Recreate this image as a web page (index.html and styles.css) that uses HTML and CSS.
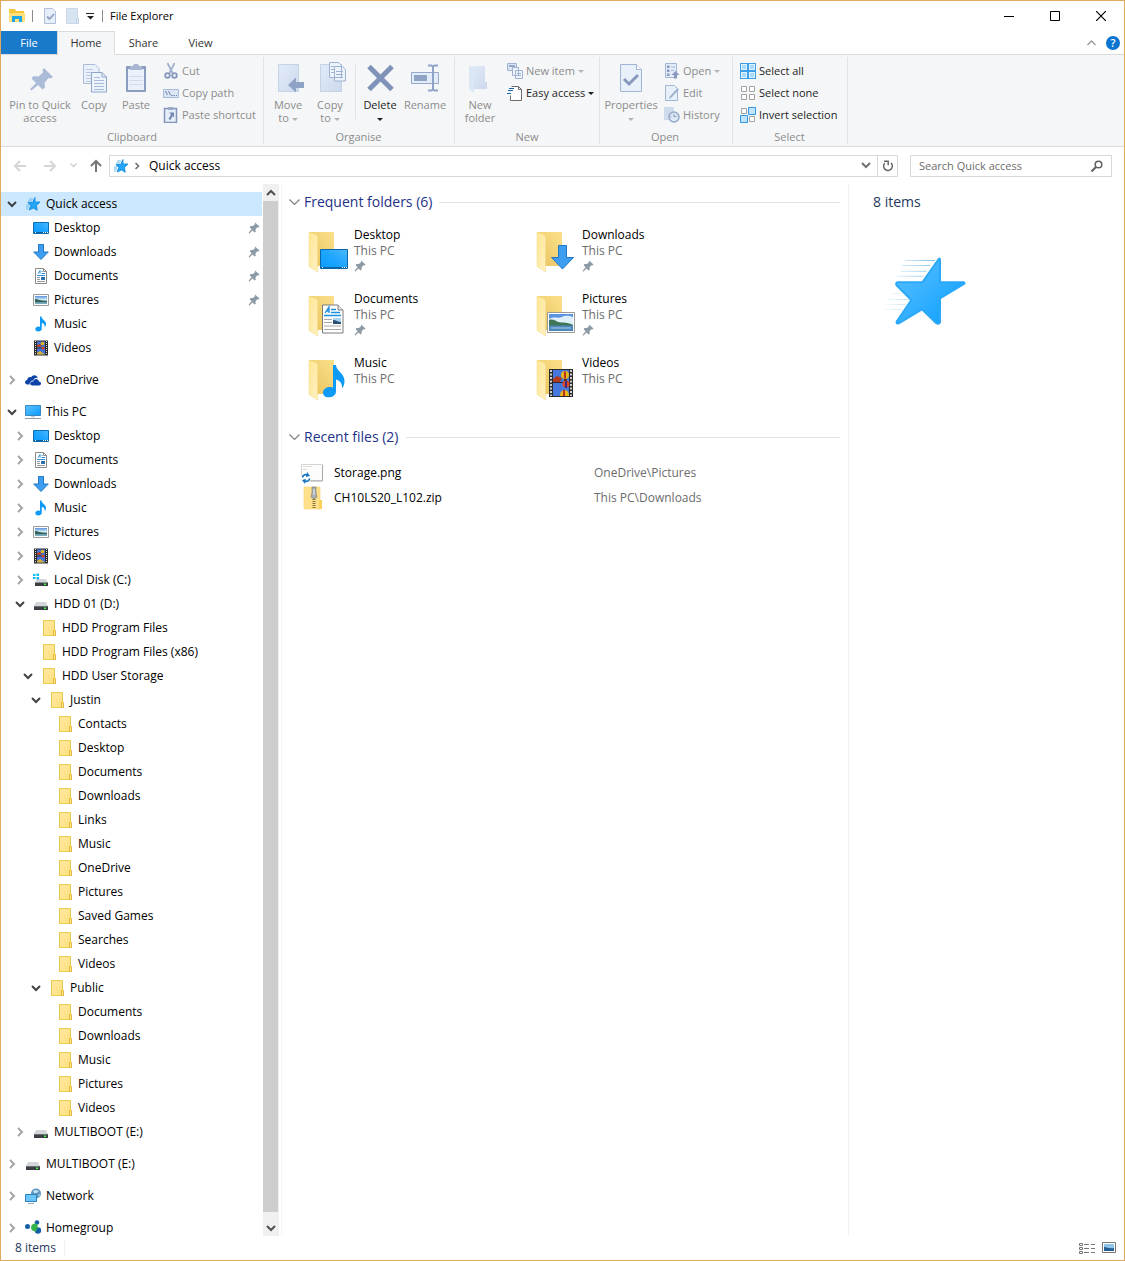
FILE: index.html
```html
<!DOCTYPE html>
<html lang="en-GB">
<head>
<meta charset="utf-8">
<meta name="viewport" content="width=device-width, initial-scale=1">
<title>File Explorer</title>
<link rel="stylesheet" href="styles.css">
</head>
<body>
<svg class="sprite" aria-hidden="true">
  <defs>
    <linearGradient id="g-blue" x1="0" y1="0" x2="1" y2="1"><stop offset="0" stop-color="#5cc0ff"/><stop offset=".5" stop-color="#34b0ff"/><stop offset="1" stop-color="#049cff"/></linearGradient>
    <linearGradient id="g-screen" x1="0" y1="1" x2="1" y2="0"><stop offset="0" stop-color="#0a9bff"/><stop offset=".5" stop-color="#1ea5ff"/><stop offset="1" stop-color="#4db8ff"/></linearGradient>
    <linearGradient id="g-folder" x1="0" y1="0" x2="1" y2="1"><stop offset="0" stop-color="#ffeaa2"/><stop offset="1" stop-color="#ffdf7e"/></linearGradient>
    <linearGradient id="g-back" x1="0" y1="1" x2="1" y2="0"><stop offset="0" stop-color="#e8c25c"/><stop offset="1" stop-color="#fbe08b"/></linearGradient>
    <linearGradient id="g-flap" x1="0" y1="0" x2="1" y2="1"><stop offset="0" stop-color="#ffe795"/><stop offset="1" stop-color="#fff0c0"/></linearGradient>
    <linearGradient id="g-sky" x1="0" y1="0" x2="0" y2="1"><stop offset="0" stop-color="#5b93dc"/><stop offset=".45" stop-color="#cfe8f8"/><stop offset=".7" stop-color="#5f8f8c"/><stop offset="1" stop-color="#7fb3d6"/></linearGradient>
    <linearGradient id="g-streak" x1="0" y1="0" x2="1" y2="0"><stop offset="0" stop-color="#9fd2f2" stop-opacity="0"/><stop offset="1" stop-color="#7fc0ea"/></linearGradient>
    <linearGradient id="g-pale" x1="0" y1="0" x2="1" y2="1"><stop offset="0" stop-color="#e3ebf7"/><stop offset="1" stop-color="#ccd9ec"/></linearGradient>
  </defs>

  <symbol id="down" viewBox="0 0 16 16"><path d="M4 6l4 4 4-4" fill="none" stroke="#404040" stroke-width="2"/></symbol>
  <symbol id="right" viewBox="0 0 16 16"><path d="M6 4l4 4-4 4" fill="none" stroke="#a6a6a6" stroke-width="2"/></symbol>
  <symbol id="pin" viewBox="0 0 16 16"><path d="M9 2.500l4.500 4-1.200 1-1-.3-1.800 2.300.2 2.300-1.200.6L6.500 10.500 3.500 13.500l-.8-.2.300-1L5.600 9.300 3.700 7.200l.8-1.200h2.300L9 4.300z" fill="#8e9aa3"/></symbol>

  <symbol id="star" viewBox="0 0 16 16"><path d="M10 1.500V6h5l-3.500 3.500.7 4.800L8.500 12 4.200 14l1.500-4.300L3 6.500h4.500z" fill="#22a5f7" stroke="#0f86d8" stroke-width=".8" stroke-linejoin="round"/><path d="M4 3h4M3 5h4M1 9h3M1 11h3M1 13h2" stroke="#6ab9ea"/></symbol>
  <symbol id="desktop" viewBox="0 0 16 16"><path d="M.5 2.500h15v11H.5z" fill="url(#g-screen)" stroke="#0c6cb4"/><path d="M1 12.500h14" stroke="#0b5e9e"/><path d="M2 12.500h1M10 12.500h1M12 12.500h1M14 12.500h1" stroke="#fff"/></symbol>
  <symbol id="downloads" viewBox="0 0 16 16"><path d="M5.500.5h5V8h4.800L8 15.500.7 8h4.800z" fill="#3d9df0" stroke="#2377c4"/></symbol>
  <symbol id="documents" viewBox="0 0 16 16"><path d="M2.500.5h8l3 3v12h-11z" fill="#fff" stroke="#8a8a8a"/><path d="M10.500.5v3h3" fill="none" stroke="#8a8a8a"/><path d="M5 5.500l2-3v3M8.500 3.500h1M8.500 5.500H12M4 7.500h8" stroke="#2b92dd" fill="none"/><path d="M4 9.500h3M4 11.500h3M4 13.500h8" stroke="#999"/><path d="M8 9h4v3H8z" fill="#2b6fae"/></symbol>
  <symbol id="pictures" viewBox="0 0 16 16"><path d="M.5 2.500h15v11H.5z" fill="#fff" stroke="#9a9a9a"/><path d="M2 4h12v8H2z" fill="url(#g-sky)"/><path d="M2 7c3 0 5 2 12 2v1H2z" fill="#2f6157"/></symbol>
  <symbol id="music" viewBox="0 0 16 16"><path d="M7 .5h1.500C9 4 13 4.500 13 8c0 1.500-.6 2.500-1.300 3.200C12 8.500 10.500 7.200 8.800 7v5.500c0 1.800-1.500 3-3.500 3s-3-1-3-2.200c0-1.600 1.600-2.700 3.200-2.700.6 0 1 .1 1.500.3z" fill="#0e9af5"/></symbol>
  <symbol id="videos" viewBox="0 0 16 16"><path d="M1 .5h14v15H1z" fill="#2c2c2c"/><path d="M2.500 1v14M13.500 1v14" stroke="#d8d8d8" stroke-dasharray="1 1"/><path d="M4 1.500h8v6H4zM4 8.500h8v6H4z" fill="#4273d8"/><path d="M4 5l3-1 2 2-3 1H4z" fill="#b9401f"/><circle cx="9.500" cy="3.500" r="1.800" fill="#e3b418"/><circle cx="10" cy="8" r="1.500" fill="#d8432a"/><path d="M4 13l3-2 5 3.500H4z" fill="#d6b02f"/></symbol>
  <symbol id="onedrive" viewBox="0 0 16 16"><path d="M4.500 12.500H2.300C.9 12.500 0 11.500 0 10.300 0 9 1 8.100 2.200 8 2.200 6.300 3.500 5 5.200 5c.4 0 .7 0 1 .2C6.900 4 8 3.300 9.300 3.300c1.700 0 3 1.100 3.500 2.600-2.300-.5-4 .8-4.700 2.600-2 .1-3.600 1.600-3.600 4z" fill="#0d43a8"/><path d="M7.200 13.500c-1.200 0-2-.9-2-2 0-1.200.9-2.100 2.200-2.100h.8C8.500 8 9.600 7 11 7c1.500 0 2.700 1 2.900 2.500 1.200 0 2.100.9 2.100 2s-.9 2-2 2z" fill="#0d43a8"/></symbol>
  <symbol id="thispc" viewBox="0 0 16 16"><path d="M.5 1.500h15v10H.5z" fill="url(#g-blue)" stroke="#3a86bf"/><path d="M6 12h4v1.500H6z" fill="#c7d3dc"/><path d="M0 14.500h16" stroke="#8fa0ad"/></symbol>
  <symbol id="drive" viewBox="0 0 16 16"><path d="M3 6h10l2 4H1z" fill="#d3d5d8"/><path d="M1 10h14v4H1z" fill="#3b3f43"/><path d="M1 10.500h14" stroke="#6b7075"/><path d="M11 11.500h2V13h-2z" fill="#3dff3d"/></symbol>
  <symbol id="sysdrive" viewBox="0 0 16 16"><path d="M4 7h9l2 4H2z" fill="#d3d5d8"/><path d="M2 10h13v4H2z" fill="#3b3f43"/><path d="M2 10.500h13" stroke="#8b9095"/><path d="M11 11.500h2V13h-2z" fill="#3dff3d"/><path d="M0 2h2.500v2H0zM3.500 1.500H6V4H3.500zM0 5h2.500v2H0zM3.500 5H6v2.500H3.500z" fill="#0bbcf2"/></symbol>
  <symbol id="folder" viewBox="0 0 16 16"><path d="M2.500.5h11v15h-11z" fill="url(#g-folder)" stroke="#ecc94f"/><path d="M12.500 10.500h2v5h-2z" fill="#ffe48f" stroke="#e3bb3f"/></symbol>
  <symbol id="network" viewBox="0 0 16 16"><circle cx="11" cy="5.500" r="5" fill="#5d94bd"/><path d="M8 3c2-2 5-1 6 1-2 0-3 2-5 1zM13 7l2-1-1 3z" fill="#bfe0f2"/><path d="M.5 6.500h11v7H.5z" fill="#6cc5fb" stroke="#2c81bd"/><path d="M3 15.500h6" stroke="#9aa9b4"/></symbol>
  <symbol id="homegroup" viewBox="0 0 16 16"><circle cx="2.500" cy="6.500" r="2.500" fill="#155fa8"/><circle cx="12" cy="2.500" r="2.300" fill="#155fa8"/><circle cx="13" cy="10.500" r="3.200" fill="#155fa8"/><path d="M6 7.500C6 4.500 9 3 11 3.500c1.500.5 2 2 1.500 4L11 11.500C8 11.500 6 10 6 7.500z" fill="#35b44a"/></symbol>

  <symbol id="t-folder" viewBox="0 0 48 48"><path d="M5 4h25v34H5z" fill="url(#g-back)"/><path d="M5 4l8.500 3.500V44L5 38.500z" fill="url(#g-flap)" stroke="#f3d880" stroke-width=".5"/></symbol>
  <symbol id="t-desktop" viewBox="0 0 48 48"><path d="M16.500 21.500h27v19h-27z" fill="url(#g-screen)" stroke="#0a66ab"/><path d="M17 39.500h26" stroke="#0a66ab"/><path d="M18 39.500h1M38 39.500h1M40 39.500h1M42 39.500h1" stroke="#fff"/></symbol>
  <symbol id="t-downloads" viewBox="0 0 48 48"><path d="M26.500 17.500h8v12h7L30.500 41 19.500 29.500h7z" fill="#3d9df0" stroke="#2377c4"/></symbol>
  <symbol id="t-documents" viewBox="0 0 48 48"><path d="M18.500 13h15.500l5 5v23h-20.500z" fill="#fff" stroke="#7d7d7d"/><path d="M34 13v5h5" fill="#e8e8e8" stroke="#7d7d7d"/><path d="M21 21l4-6v6M22 19h3M27 17.500h5M27 20.500h9M20 23.500h17" fill="none" stroke="#1f8fe0" stroke-width="1.300"/><path d="M20 27.500h8M20 30.500h8M20 34h17M20 37.500h17" stroke="#a8a8a8"/><path d="M29 26h8v6h-8z" fill="#a9d3ee"/><path d="M29 28c3 0 5 2 8 2v2h-8z" fill="#2b4f72"/></symbol>
  <symbol id="t-pictures" viewBox="0 0 48 48"><path d="M15.500 20.500h27v20h-27z" fill="#fff" stroke="#9a9a9a"/><path d="M17 22h24v17H17z" fill="#5a93e0"/><path d="M17 27c5-3 9 0 13-2s7-1 11 0v8H17z" fill="#dff0fb"/><path d="M17 28c3-1 6 0 9 2 5 1 10 0 15 3v1H17z" fill="#3f7658"/><path d="M17 33.500h24V39H17z" fill="#4c87bd"/><path d="M19 36h20" stroke="#a5cde6"/></symbol>
  <symbol id="t-music" viewBox="0 0 48 48"><path d="M29 9h3c0 6 8.500 8 8.500 16 0 3-1 5.500-2.500 7.500.5-5-2-8-6-9v12c0 3.500-3.500 5.800-7.500 5.800S19 39 19 36.500c0-3.500 3.500-5.500 7-5.500 1.200 0 2 .2 3 .5z" fill="#0e9af5"/></symbol>
  <symbol id="t-videos" viewBox="0 0 48 48"><path d="M17 13h24v28H17z" fill="#2b2b2b"/><path d="M19 14v26M39 14v26" stroke="#cfcfcf" stroke-width="2" stroke-dasharray="2 1.500"/><path d="M21 14h16v12H21zM21 27h16v13H21z" fill="#4577dc"/><path d="M21 23l4-3 5 2-2 4h-7z" fill="#b3391f"/><circle cx="33" cy="19" r="4" fill="#e8b81a"/><path d="M32 15.500h2v7h-2z" fill="#b93320"/><path d="M32 23h3v2h-3z" fill="#40301a"/><circle cx="34" cy="28" r="3.500" fill="#dd4a2a"/><path d="M33 25h2v7h-2z" fill="#3b2a7a"/><path d="M28 40c0-4 2-6 4.500-6s4.500 2 4.500 6z" fill="#e8b81a"/><path d="M31 34h2v6h-2z" fill="#b93320"/></symbol>

  <symbol id="r-pin" viewBox="0 0 32 32"><path d="M20 6l9 9-2.500 1.500-2-.5-4 5 .5 4.500-2.500 2-4.500-4.500L7.500 28.500 6 27.300 12 21l-4.500-4.500L9.500 14l5 .5 4.500-4-.5-2.500z" fill="#acbcd8"/></symbol>
  <symbol id="r-copy" viewBox="0 0 32 32"><path d="M5.500 2.500H17l4 4v15H5.500z" fill="#eaf1fa" stroke="#aabbd8"/><path d="M8 7.500h7M8 10.500h9M8 13.500h6M8 16.500h6M8 19.500h5" stroke="#b9c8e0"/><path d="M13.500 10.500H24l4.500 4.500v15h-15z" fill="#edf3fb" stroke="#8fa5c8"/><path d="M24 10.500v4.500h4.500" fill="none" stroke="#8fa5c8"/><path d="M16 15.500h6M16 18.500h10M16 21.500h10M16 24.500h10M16 27.500h10" stroke="#a8bbda"/></symbol>
  <symbol id="r-paste" viewBox="0 0 32 32"><rect x="6" y="4" width="20" height="26" rx="1" fill="#8a9cbf"/><path d="M8 7h16v21H8z" fill="#eaf1fb"/><path d="M9 14.500h14M9 18.500h14M9 22.500h14" stroke="#d2def0"/><path d="M10 4h3c0-3 6-3 6 0h3v4H10z" fill="#a9b6cf"/></symbol>
  <symbol id="r-move" viewBox="0 0 32 32"><path d="M6 2h21v28H6z" fill="url(#g-pale)"/><path d="M6.500 2.500h20v27h-20z" fill="none" stroke="#c5d3e8"/><path d="M16 23l8-7.500v4.500h8v6h-8v4.500z" fill="#8fa3c7"/></symbol>
  <symbol id="r-copyto" viewBox="0 0 32 32"><path d="M6 2h22v28H6z" fill="url(#g-pale)"/><path d="M6.500 2.500h21v27h-21z" fill="none" stroke="#c5d3e8"/><path d="M15.500.5h9l3 3v12h-12zM20.500 4.500h8l3 3V19H20.500z" fill="#edf3fb" stroke="#9fb2d2"/><path d="M17 4.500h3M17 7.500h3M17 10.500h3M22 9.500h7M22 12.500h7M22 15.500h7" stroke="#9fb2d2"/></symbol>
  <symbol id="r-delete" viewBox="0 0 32 32"><path d="M5 4.500l23 23M28 4.500l-23 23" stroke="#7f92b7" stroke-width="5"/></symbol>
  <symbol id="r-rename" viewBox="0 0 32 32"><path d="M2.500 10.500h27v11h-27z" fill="#e3ecf8" stroke="#94a8ca"/><path d="M5 13h13v6H5z" fill="#8fa3c7"/><path d="M19 3.500h3.500l1.500 1 1.500-1H29M19 28.500h3.500l1.500-1 1.500 1H29M24 4v24" fill="none" stroke="#8fa3c7" stroke-width="2"/></symbol>
  <symbol id="r-newfolder" viewBox="0 0 32 32"><path d="M5 4h16v16h2v7H5z" fill="url(#g-pale)"/><path d="M5 4l5 3v24l-5-4z" fill="#dce7f5"/></symbol>
  <symbol id="r-properties" viewBox="0 0 32 32"><path d="M5.500 2.500h16l5 5v22h-21z" fill="#e8f0fa" stroke="#a3b5d4"/><path d="M21.500 2.500v5h5" fill="#fff" stroke="#a3b5d4"/><path d="M9 17l5 5 9-9" fill="none" stroke="#8799bd" stroke-width="3"/></symbol>

  <symbol id="s-cut" viewBox="0 0 16 16"><path d="M4.500 0l5 10M11.500 0l-5 10" stroke="#a0b0cd" stroke-width="1.800"/><circle cx="4.500" cy="12.500" r="2.300" fill="none" stroke="#8599bf" stroke-width="1.800"/><circle cx="11.500" cy="12.500" r="2.300" fill="none" stroke="#8599bf" stroke-width="1.800"/></symbol>
  <symbol id="s-path" viewBox="0 0 16 16"><path d="M.5 4.500h15v8H.5z" fill="#dbe6f4" stroke="#a9bad8"/><path d="M2.500 6l2 4M5.500 6l2 4M8 10.500h1.500M10.500 10.500H12M13 10.500h1" stroke="#6d80a6"/></symbol>
  <symbol id="s-shortcut" viewBox="0 0 16 16"><path d="M1.500 1.500h12v14h-12z" fill="#e6eef9" stroke="#8395b8" stroke-width="1.500"/><path d="M5 0h5v3H5z" fill="#98a8c5"/><path d="M6 5.500h5v5L9.500 9 7.500 13 5.500 12 8 7.500z" fill="#7388b0"/></symbol>
  <symbol id="s-newitem" viewBox="0 0 16 16"><path d="M.5.5h9v7h-9z" fill="#dbe5f3" stroke="#a0b2d0"/><path d="M2 3h6" stroke="#8093b8" stroke-width="1.500"/><path d="M5.500 4.500h6v8h-6zM8.500 7.500h7v8h-7z" fill="#eef4fb" stroke="#a0b2d0"/><path d="M10 10.500h4M10 12.500h4" stroke="#a0b2d0"/></symbol>
  <symbol id="s-easy" viewBox="0 0 16 16"><path d="M4.500 1.500h7l3 3v11h-11v-5" fill="#fff" stroke="#6c6c6c"/><path d="M11.500 1.500v3h3" fill="none" stroke="#6c6c6c"/><path d="M2 3.500h5M1 5.500h5M0 8.500h4" stroke="#1c66a8"/></symbol>
  <symbol id="s-open" viewBox="0 0 16 16"><path d="M1.500.5h11v14h-11z" fill="#e3ecf8" stroke="#a3b5d4"/><path d="M3 2.500h2.500v2.500H3zM3 6.500h2.500V9H3zM3 10.500h2.500V13H3z" fill="#8799bd"/><path d="M7 4h4M7 7.500h3" stroke="#a3b5d4"/><path d="M11.500 8l4 4h-2.500v3.500h-3V12H7.500z" fill="#8799bd"/></symbol>
  <symbol id="s-edit" viewBox="0 0 16 16"><path d="M1.500.5h9l3 3v12h-12z" fill="#e8f0fa" stroke="#a3b5d4"/><path d="M15 4.500L7 13l-2 1 .8-2.500L13.500 3z" fill="#a0b2d0"/></symbol>
  <symbol id="s-history" viewBox="0 0 16 16"><path d="M0 0h10v13H0z" fill="#cfdcee"/><circle cx="10" cy="10" r="5" fill="#dfe8f5" stroke="#94a8ca" stroke-width="1.500"/><path d="M10 7v3l2.500-1M6.500 10h1" fill="none" stroke="#8799bd"/></symbol>
  <symbol id="s-all" viewBox="0 0 16 16"><path d="M0 0h16v16H0z" fill="#3d9fea"/><path d="M1 1h6v6H1zM9 1h6v6H9zM1 9h6v6H1zM9 9h6v6H9z" fill="#e2f3fe"/><path d="M2 2h4v4H2zM10 2h4v4h-4zM2 10h4v4H2zM10 10h4v4h-4z" fill="#a8dbfc"/></symbol>
  <symbol id="s-none" viewBox="0 0 16 16"><path d="M1.500 1.500h5v5h-5zM9.500 1.500h5v5h-5zM1.500 9.500h5v5h-5zM9.500 9.500h5v5h-5z" fill="#fff" stroke="#a2a2a2"/></symbol>
  <symbol id="s-invert" viewBox="0 0 16 16"><path d="M1.500 1.500h5v5h-5zM9.500 9.500h5v5h-5z" fill="#fff" stroke="#a2a2a2"/><path d="M8.500.5h7v7h-7zM.5 8.500h7v7h-7z" fill="#bfe4fc" stroke="#2f96e8"/></symbol>

  <symbol id="explorer" viewBox="0 0 16 16"><path d="M0 1h6l1 2h8v11H0z" fill="#f5c73d"/><path d="M0 5h16v9H0z" fill="#ffe07a"/><path d="M3 8h10v6h-3v-3H6v3H3z" fill="#1ba7e8"/></symbol>
  <symbol id="q-props" viewBox="0 0 16 16"><path d="M2.500.5h8l3 3v12h-11z" fill="#e6eefa" stroke="#b0bfda"/><path d="M5 8.500l2.500 2.500L12 6" fill="none" stroke="#8fa1c4" stroke-width="1.800"/></symbol>
  <symbol id="q-folder" viewBox="0 0 16 16"><path d="M2 0h12v10h1v6H2z" fill="#d9e4f3"/><path d="M2.500.5h11v15h-11z" fill="none" stroke="#cad8ec"/><path d="M12.500 10.500h2v5h-2z" fill="#e5edf8" stroke="#c5d3e8"/></symbol>
</svg>

<div class="window">
  <header class="titlebar">
    <svg class="i16"><use href="#explorer"/></svg>
    <span class="rule"></span>
    <div class="quick">
      <button aria-label="Properties"><svg class="i16"><use href="#q-props"/></svg></button>
      <button aria-label="New folder"><svg class="i16"><use href="#q-folder"/></svg></button>
      <button aria-label="Customise Quick Access Toolbar"><svg width="8" height="8" viewBox="0 0 8 8"><path d="M0 1.500h8" stroke="#222"/><path d="M1 4h7L4.500 7.500z" fill="#222"/></svg></button>
    </div>
    <span class="rule"></span>
    <h1>File Explorer</h1>
    <div class="caption">
      <button aria-label="Minimise"><svg width="10" height="10"><path d="M0 5.500h10" stroke="#000"/></svg></button>
      <button aria-label="Maximise"><svg width="10" height="10"><path d="M.5.5h9v9h-9z" fill="none" stroke="#000"/></svg></button>
      <button aria-label="Close"><svg width="10" height="10"><path d="M0 0l10 10M10 0L0 10" stroke="#000" stroke-width="1.200"/></svg></button>
    </div>
  </header>

  <div class="tabs">
    <button class="tab file">File</button>
    <button class="tab current">Home</button>
    <button class="tab">Share</button>
    <button class="tab">View</button>
    <div class="tabs-end">
      <button aria-label="Collapse ribbon"><svg width="9" height="6"><path d="M.5 5l4-4 4 4" fill="none" stroke="#9a9a9a" stroke-width="1.300"/></svg></button>
      <button class="help" aria-label="Help">?</button>
    </div>
  </div>

  <div class="ribbon">
    <section class="group clipboard">
      <div class="tools">
        <button class="big wide"><svg><use href="#r-pin"/></svg><span>Pin to Quick<br>access</span></button>
        <button class="big narrow"><svg><use href="#r-copy"/></svg><span>Copy</span></button>
        <button class="big paste"><svg><use href="#r-paste"/></svg><span>Paste</span></button>
        <div class="stack">
          <button><svg class="i16"><use href="#s-cut"/></svg>Cut</button>
          <button><svg class="i16"><use href="#s-path"/></svg>Copy path</button>
          <button><svg class="i16"><use href="#s-shortcut"/></svg>Paste shortcut</button>
        </div>
      </div>
      <h2>Clipboard</h2>
    </section>
    <section class="group organise">
      <div class="tools">
        <button class="big"><svg><use href="#r-move"/></svg><span>Move<br>to <i class="caret"></i></span></button>
        <button class="big"><svg><use href="#r-copyto"/></svg><span>Copy<br>to <i class="caret"></i></span></button>
        <span class="divider"></span>
        <button class="big on"><svg><use href="#r-delete"/></svg><span>Delete<br><i class="caret"></i></span></button>
        <button class="big rename"><svg><use href="#r-rename"/></svg><span>Rename</span></button>
      </div>
      <h2>Organise</h2>
    </section>
    <section class="group new">
      <div class="tools">
        <button class="big"><svg><use href="#r-newfolder"/></svg><span>New<br>folder</span></button>
        <div class="stack">
          <button><svg class="i16"><use href="#s-newitem"/></svg>New item <i class="caret"></i></button>
          <button class="on"><svg class="i16"><use href="#s-easy"/></svg>Easy access <i class="caret"></i></button>
        </div>
      </div>
      <h2>New</h2>
    </section>
    <section class="group open">
      <div class="tools">
        <button class="big mid"><svg><use href="#r-properties"/></svg><span>Properties<br><i class="caret"></i></span></button>
        <div class="stack">
          <button><svg class="i16"><use href="#s-open"/></svg>Open <i class="caret"></i></button>
          <button><svg class="i16"><use href="#s-edit"/></svg>Edit</button>
          <button><svg class="i16"><use href="#s-history"/></svg>History</button>
        </div>
      </div>
      <h2>Open</h2>
    </section>
    <section class="group select">
      <div class="tools">
        <div class="stack">
          <button class="on"><svg class="i16"><use href="#s-all"/></svg>Select all</button>
          <button class="on"><svg class="i16"><use href="#s-none"/></svg>Select none</button>
          <button class="on"><svg class="i16"><use href="#s-invert"/></svg>Invert selection</button>
        </div>
      </div>
      <h2>Select</h2>
    </section>
  </div>

  <div class="navbar">
    <div class="history">
      <button aria-label="Back"><svg width="14" height="12"><path d="M13 6H2M7 1L2 6l5 5" fill="none" stroke="#d6d6d6" stroke-width="2"/></svg></button>
      <button aria-label="Forward"><svg width="14" height="12"><path d="M1 6h11M7 1l5 5-5 5" fill="none" stroke="#d6d6d6" stroke-width="2"/></svg></button>
      <button class="recent" aria-label="Recent locations"><svg width="7" height="5"><path d="M.5.5l3 3 3-3" fill="none" stroke="#cfcfcf" stroke-width="1.500"/></svg></button>
      <button class="up" aria-label="Up"><svg width="12" height="13"><path d="M6 13V2M1 7l5-5 5 5" fill="none" stroke="#757575" stroke-width="2"/></svg></button>
    </div>
    <div class="address">
      <svg class="i16"><use href="#star"/></svg>
      <svg width="5" height="8"><path d="M.5 1l3 3-3 3" fill="none" stroke="#6a6a6a" stroke-width="1.500"/></svg>
      <a href="#">Quick access</a>
      <button aria-label="Previous locations"><svg width="10" height="7"><path d="M1 1l4 4 4-4" fill="none" stroke="#707070" stroke-width="2"/></svg></button>
      <button class="refresh" aria-label="Refresh"><svg width="12" height="12" viewBox="0 0 12 12"><path d="M2.700 3.300A4.300 4.300 0 1 0 9 3" fill="none" stroke="#666" stroke-width="1.600"/><path d="M2 1.200h4.200v4" fill="none" stroke="#666" stroke-width="1.500"/></svg></button>
    </div>
    <label class="search">
      <input type="search" placeholder="Search Quick access" aria-label="Search Quick access">
      <svg width="12" height="12"><circle cx="7.500" cy="4.500" r="3.300" fill="none" stroke="#606060" stroke-width="1.500"/><path d="M5 7L.5 11.500" stroke="#606060" stroke-width="2"/></svg>
    </label>
  </div>

  <div class="panes">
    <nav class="tree" aria-label="Navigation pane">
      <ul>
        <li>
          <div class="row selected"><button aria-label="Collapse"><svg class="i16"><use href="#down"/></svg></button><a href="#"><svg class="i16"><use href="#star"/></svg>Quick access</a></div>
          <ul>
            <li class="row leaf"><a href="#"><svg class="i16"><use href="#desktop"/></svg>Desktop</a><svg class="i16"><use href="#pin"/></svg></li>
            <li class="row leaf"><a href="#"><svg class="i16"><use href="#downloads"/></svg>Downloads</a><svg class="i16"><use href="#pin"/></svg></li>
            <li class="row leaf"><a href="#"><svg class="i16"><use href="#documents"/></svg>Documents</a><svg class="i16"><use href="#pin"/></svg></li>
            <li class="row leaf"><a href="#"><svg class="i16"><use href="#pictures"/></svg>Pictures</a><svg class="i16"><use href="#pin"/></svg></li>
            <li class="row leaf"><a href="#"><svg class="i16"><use href="#music"/></svg>Music</a></li>
            <li class="row leaf"><a href="#"><svg class="i16"><use href="#videos"/></svg>Videos</a></li>
          </ul>
        </li>
        <li>
          <div class="row"><button aria-label="Expand"><svg class="i16"><use href="#right"/></svg></button><a href="#"><svg class="i16"><use href="#onedrive"/></svg>OneDrive</a></div>
        </li>
        <li>
          <div class="row"><button aria-label="Collapse"><svg class="i16"><use href="#down"/></svg></button><a href="#"><svg class="i16"><use href="#thispc"/></svg>This PC</a></div>
          <ul>
            <li class="row"><button aria-label="Expand"><svg class="i16"><use href="#right"/></svg></button><a href="#"><svg class="i16"><use href="#desktop"/></svg>Desktop</a></li>
            <li class="row"><button aria-label="Expand"><svg class="i16"><use href="#right"/></svg></button><a href="#"><svg class="i16"><use href="#documents"/></svg>Documents</a></li>
            <li class="row"><button aria-label="Expand"><svg class="i16"><use href="#right"/></svg></button><a href="#"><svg class="i16"><use href="#downloads"/></svg>Downloads</a></li>
            <li class="row"><button aria-label="Expand"><svg class="i16"><use href="#right"/></svg></button><a href="#"><svg class="i16"><use href="#music"/></svg>Music</a></li>
            <li class="row"><button aria-label="Expand"><svg class="i16"><use href="#right"/></svg></button><a href="#"><svg class="i16"><use href="#pictures"/></svg>Pictures</a></li>
            <li class="row"><button aria-label="Expand"><svg class="i16"><use href="#right"/></svg></button><a href="#"><svg class="i16"><use href="#videos"/></svg>Videos</a></li>
            <li class="row"><button aria-label="Expand"><svg class="i16"><use href="#right"/></svg></button><a href="#"><svg class="i16"><use href="#sysdrive"/></svg>Local Disk (C:)</a></li>
            <li>
              <div class="row"><button aria-label="Collapse"><svg class="i16"><use href="#down"/></svg></button><a href="#"><svg class="i16"><use href="#drive"/></svg>HDD 01 (D:)</a></div>
              <ul>
                <li class="row leaf"><a href="#"><svg class="i16"><use href="#folder"/></svg>HDD Program Files</a></li>
                <li class="row leaf"><a href="#"><svg class="i16"><use href="#folder"/></svg>HDD Program Files (x86)</a></li>
                <li>
                  <div class="row"><button aria-label="Collapse"><svg class="i16"><use href="#down"/></svg></button><a href="#"><svg class="i16"><use href="#folder"/></svg>HDD User Storage</a></div>
                  <ul>
                    <li>
                      <div class="row"><button aria-label="Collapse"><svg class="i16"><use href="#down"/></svg></button><a href="#"><svg class="i16"><use href="#folder"/></svg>Justin</a></div>
                      <ul>
                        <li class="row leaf"><a href="#"><svg class="i16"><use href="#folder"/></svg>Contacts</a></li>
                        <li class="row leaf"><a href="#"><svg class="i16"><use href="#folder"/></svg>Desktop</a></li>
                        <li class="row leaf"><a href="#"><svg class="i16"><use href="#folder"/></svg>Documents</a></li>
                        <li class="row leaf"><a href="#"><svg class="i16"><use href="#folder"/></svg>Downloads</a></li>
                        <li class="row leaf"><a href="#"><svg class="i16"><use href="#folder"/></svg>Links</a></li>
                        <li class="row leaf"><a href="#"><svg class="i16"><use href="#folder"/></svg>Music</a></li>
                        <li class="row leaf"><a href="#"><svg class="i16"><use href="#folder"/></svg>OneDrive</a></li>
                        <li class="row leaf"><a href="#"><svg class="i16"><use href="#folder"/></svg>Pictures</a></li>
                        <li class="row leaf"><a href="#"><svg class="i16"><use href="#folder"/></svg>Saved Games</a></li>
                        <li class="row leaf"><a href="#"><svg class="i16"><use href="#folder"/></svg>Searches</a></li>
                        <li class="row leaf"><a href="#"><svg class="i16"><use href="#folder"/></svg>Videos</a></li>
                      </ul>
                    </li>
                    <li>
                      <div class="row"><button aria-label="Collapse"><svg class="i16"><use href="#down"/></svg></button><a href="#"><svg class="i16"><use href="#folder"/></svg>Public</a></div>
                      <ul>
                        <li class="row leaf"><a href="#"><svg class="i16"><use href="#folder"/></svg>Documents</a></li>
                        <li class="row leaf"><a href="#"><svg class="i16"><use href="#folder"/></svg>Downloads</a></li>
                        <li class="row leaf"><a href="#"><svg class="i16"><use href="#folder"/></svg>Music</a></li>
                        <li class="row leaf"><a href="#"><svg class="i16"><use href="#folder"/></svg>Pictures</a></li>
                        <li class="row leaf"><a href="#"><svg class="i16"><use href="#folder"/></svg>Videos</a></li>
                      </ul>
                    </li>
                  </ul>
                </li>
              </ul>
            </li>
            <li class="row"><button aria-label="Expand"><svg class="i16"><use href="#right"/></svg></button><a href="#"><svg class="i16"><use href="#drive"/></svg>MULTIBOOT (E:)</a></li>
          </ul>
        </li>
        <li>
          <div class="row"><button aria-label="Expand"><svg class="i16"><use href="#right"/></svg></button><a href="#"><svg class="i16"><use href="#drive"/></svg>MULTIBOOT (E:)</a></div>
        </li>
        <li>
          <div class="row"><button aria-label="Expand"><svg class="i16"><use href="#right"/></svg></button><a href="#"><svg class="i16"><use href="#network"/></svg>Network</a></div>
        </li>
        <li>
          <div class="row"><button aria-label="Expand"><svg class="i16"><use href="#right"/></svg></button><a href="#"><svg class="i16"><use href="#homegroup"/></svg>Homegroup</a></div>
        </li>
      </ul>
    </nav>
    <div class="scrollbar">
      <button aria-label="Scroll up"><svg width="10" height="7"><path d="M1 6l4-4 4 4" fill="none" stroke="#505050" stroke-width="2"/></svg></button>
      <div class="thumb"></div>
      <button class="last" aria-label="Scroll down"><svg width="10" height="7"><path d="M1 1l4 4 4-4" fill="none" stroke="#505050" stroke-width="2"/></svg></button>
    </div>

    <main class="content">
      <section>
        <h2><svg width="11" height="7"><path d="M.5.5l5 5 5-5" fill="none" stroke="#808080" stroke-width="1.200"/></svg>Frequent folders (6)</h2>
        <div class="tiles">
          <a class="tile" href="#"><svg><use href="#t-folder"/><use href="#t-desktop"/></svg><span><b>Desktop</b>This PC<svg class="i16"><use href="#pin"/></svg></span></a>
          <a class="tile" href="#"><svg><use href="#t-folder"/><use href="#t-downloads"/></svg><span><b>Downloads</b>This PC<svg class="i16"><use href="#pin"/></svg></span></a>
          <a class="tile" href="#"><svg><use href="#t-folder"/><use href="#t-documents"/></svg><span><b>Documents</b>This PC<svg class="i16"><use href="#pin"/></svg></span></a>
          <a class="tile" href="#"><svg><use href="#t-folder"/><use href="#t-pictures"/></svg><span><b>Pictures</b>This PC<svg class="i16"><use href="#pin"/></svg></span></a>
          <a class="tile" href="#"><svg><use href="#t-folder"/><use href="#t-music"/></svg><span><b>Music</b>This PC</span></a>
          <a class="tile" href="#"><svg><use href="#t-folder"/><use href="#t-videos"/></svg><span><b>Videos</b>This PC</span></a>
        </div>
      </section>
      <section>
        <h2><svg width="11" height="7"><path d="M.5.5l5 5 5-5" fill="none" stroke="#808080" stroke-width="1.200"/></svg>Recent files (2)</h2>
        <table class="files">
          <tr>
            <td class="name"><a href="#"><svg viewBox="0 0 24 24"><path d="M1.500 3.500h21v16h-21z" fill="#fcfcfd" stroke="#d5d5d5"/><path d="M22.500 4v16H10" fill="none" stroke="#a9a9a9"/><path d="M3 5.500h9M3 8.500h4" stroke="#e8d9d0"/><circle cx="6" cy="17" r="5" fill="#fff"/><path d="M2.500 16.500c.3-2.500 2.500-3.500 5-2.500M9.500 17.500c-.3 2.500-2.500 3.500-5 2.500" fill="none" stroke="#1674c4" stroke-width="1.800"/><path d="M7 11l3 4-4 1zM5 23l-3-4 4-1z" fill="#1674c4"/></svg>Storage.png</a></td>
            <td>OneDrive\Pictures</td>
          </tr>
          <tr>
            <td class="name"><a href="#"><svg viewBox="0 0 24 24"><path d="M4 1h16v22H4z" fill="#ffe08a"/><path d="M19 14h3v9h-3z" fill="#fbd052"/><path d="M4 1h16v22H4z" fill="none" stroke="#f6d56f" stroke-width=".6"/><path d="M14 7v16" stroke="#857338" stroke-width="3" stroke-dasharray="1 1"/><path d="M12 1h4v6l1 4-3 2-3-2 1-4z" fill="#a9aeb2" stroke="#777" stroke-width=".6"/><path d="M14 3v6" stroke="#f0f0f0"/></svg>CH10LS20_L102.zip</a></td>
            <td>This PC\Downloads</td>
          </tr>
        </table>
      </section>
    </main>

    <aside class="details">
      <h2>8 items</h2>
      <svg viewBox="120 210 264 216"><path d="M195 225h90v3h-90zM186 240h84v3h-84zM182 257h78v3h-78zM170 272h80v3h-80zM155 324h30v2h-30zM140 342h66v3h-66zM132 357h64v3h-64zM122 372h64v3h-64z" fill="url(#g-streak)"/><path d="M296 222Q300 219 300 224V292H371Q376 293 372 297L300 340V412Q295 419 288 414L246 373 176 415Q168 417 170 410L214 345 169 300Q167 293 173 292H247z" fill="url(#g-blue)" stroke="#2ba9f8" stroke-width="6" stroke-linejoin="round"/></svg>
    </aside>
  </div>

  <footer class="status">
    <span>8 items</span>
    <div class="views">
      <button aria-label="Details view"><svg width="16" height="12"><path d="M.5 1.500h3v2h-3zM.5 5.500h3v2h-3zM.5 9.500h3v2h-3z" fill="#fff" stroke="#777"/><path d="M5 2.500h5M12 2.500h4M5 6.500h5M12 6.500h4M5 10.500h5M12 10.500h4" stroke="#777"/></svg></button>
      <button aria-label="Large icons view"><svg width="14" height="12"><path d="M.5.500h13v10H.5z" fill="#fff" stroke="#777"/><path d="M2 2h10v7H2z" fill="#8ec3ea"/><path d="M2 5c3 0 5 2 10 1v3H2z" fill="#245c94"/></svg></button>
    </div>
  </footer>
</div>
</body>
</html>
```
FILE: styles.css
```css
* { box-sizing: border-box; }

body {
  margin: 0;
  font: 12px/16px "Open Sans", "Noto Sans", sans-serif;
  color: #000;
  background: #fff;
}

h1, h2, ul { margin: 0; padding: 0; font: inherit; }
ul { list-style: none; }
a { color: inherit; text-decoration: none; }
svg { display: block; flex: none; }
.sprite { position: absolute; width: 0; height: 0; }
.i16 { width: 16px; height: 16px; }

button {
  display: flex;
  align-items: center;
  justify-content: center;
  margin: 0;
  padding: 0;
  border: 0;
  background: none;
  color: inherit;
  font: inherit;
}

.window {
  display: flex;
  flex-direction: column;
  height: 100vh;
  border: 1px solid #e0a95f;
}

/* Title bar */
.titlebar {
  display: flex;
  align-items: center;
  height: 30px;
  padding-left: 8px;
}
.rule { width: 1px; height: 12px; margin: 0 7px; background: #8c8c8c; }
.quick { display: flex; gap: 6px; padding: 0 1px 0 2px; }
.titlebar h1 { font-size: 11px; }
.caption { display: flex; margin-left: auto; }
.caption button { width: 46px; height: 29px; }

/* Ribbon tabs */
.tabs {
  display: flex;
  height: 24px;
  border-bottom: 1px solid #dadbdc;
  font-size: 11px;
}
.tab { width: 57px; height: 23px; color: #333; }
.tab.file { width: 56px; background: #1979ca; color: #fff; }
.tab.current {
  width: 58px;
  height: 24px;
  padding-bottom: 1px;
  border: 1px solid #dadbdc;
  border-bottom: 0;
  background: #f5f6f7;
}
.tabs-end { display: flex; align-items: center; gap: 10px; margin-left: auto; padding-right: 4px; }
.help {
  width: 14px;
  height: 14px;
  border-radius: 50%;
  background: #0b74d1;
  color: #fff;
  font-weight: 600;
}

/* Ribbon */
.ribbon {
  display: flex;
  padding: 2px 0;
  border-bottom: 1px solid #dadbdc;
  background: #f5f6f7;
  color: #8c8c8c;
  font-size: 11px;
}
.group {
  display: flex;
  flex-direction: column;
  justify-content: space-between;
  height: 87px;
  padding: 3px 4px 0;
  border-right: 1px solid #e2e3e4;
}
.group h2 { line-height: 14px; text-align: center; }
.clipboard { width: 263px; }
.organise { width: 191px; padding-left: 3px; }
.new { width: 145px; }
.open { width: 133px; padding-left: 2px; }
.select { width: 115px; padding-left: 3px; }
.tools { display: flex; }
.big {
  flex-direction: column;
  justify-content: flex-start;
  gap: 4px;
  width: 42px;
  height: 66px;
  padding-top: 2px;
  line-height: 13px;
  white-space: nowrap;
  text-align: center;
}
.big svg { width: 32px; height: 32px; }
.big.wide { width: 70px; }
.big.narrow { width: 38px; }
.big.paste { width: 46px; }
.big.rename { width: 48px; }
.big.mid { width: 58px; }
.divider { width: 1px; height: 54px; margin: 5px 3px 0 4px; background: #e2e3e4; }
.on { color: #1e1e1e; }
.caret {
  display: inline-block;
  border: 3px solid transparent;
  border-top-color: #b4b4b4;
  border-bottom: 0;
  vertical-align: middle;
}
.on .caret { border-top-color: #1e1e1e; }
.stack { padding-left: 4px; }
.new .stack { padding-left: 6px; }
.stack button { height: 22px; gap: 3px; white-space: nowrap; }

/* Address row */
.navbar {
  display: flex;
  align-items: center;
  height: 37px;
  padding: 0 12px;
}
.history { display: flex; align-items: center; width: 96px; }
.history button { width: 14px; margin-right: 16px; }
.history .recent { width: 8px; margin: 0 13px 0 -4px; }
.history .up { width: 12px; margin: 0; }
.address {
  display: flex;
  flex: 1;
  align-items: center;
  gap: 6px;
  height: 22px;
  padding-left: 3px;
  border: 1px solid #d9d9d9;
}
.address a { flex: 1; margin-left: 3px; }
.address .refresh { width: 20px; height: 20px; border-left: 1px solid #d9d9d9; }
.search {
  display: flex;
  align-items: center;
  width: 202px;
  height: 22px;
  margin-left: 12px;
  padding: 0 8px;
  border: 1px solid #d9d9d9;
}
.search input {
  flex: 1;
  min-width: 0;
  padding: 0;
  border: 0;
  outline: 0;
  background: none;
  font: inherit;
  font-size: 11px;
}
.search input::placeholder { color: #6d6d6d; opacity: 1; }

/* Panes */
.panes { display: flex; flex: 1; min-height: 0; }
.tree { width: 262px; padding: 8px 1px 0 0; overflow: hidden; }
.tree > ul > li { margin-bottom: 8px; }
.tree ul ul { padding-left: 8px; }
.row { display: flex; align-items: center; gap: 5px; height: 24px; padding-left: 3px; }
.row.leaf { padding-left: 24px; }
.row.selected { background: #cce8ff; }
.row a { display: flex; flex: 1; align-items: center; gap: 5px; white-space: nowrap; }

.scrollbar { display: flex; flex-direction: column; width: 16px; background: #f0f0f0; }
.scrollbar button { height: 17px; }
.scrollbar .last { height: 24px; padding-top: 8px; }
.thumb { flex: 1; margin-right: 1px; background: #cdcdcd; }

.content {
  flex: 1;
  min-width: 0;
  margin-left: 2px;
  padding: 8px 8px 0 7px;
  border-left: 1px solid #f5f5f5;
}
.content h2 {
  display: flex;
  align-items: center;
  gap: 4px;
  height: 20px;
  color: #1e3287;
  font-size: 14px;
}
.content h2::after { content: ""; flex: 1; height: 1px; margin-left: 3px; background: #e2e2e2; }
.tiles {
  display: grid;
  grid-template-columns: 228px 228px;
  grid-auto-rows: 64px;
  padding: 15px 0 8px 15px;
}
.tile { display: flex; gap: 2px; color: #6d6d6d; }
.tile > svg { width: 48px; height: 48px; margin-top: 1px; }
.tile b { display: block; color: #000; font-weight: normal; }
.tile span svg { margin: -1px 0 0 -2px; }
.files { width: 100%; margin-top: 13px; border-collapse: collapse; color: #6d6d6d; }
.files td { height: 25px; padding: 0; }
.files .name { width: 305px; padding-left: 11px; color: #000; }
.files a { display: flex; align-items: center; gap: 10px; }
.files svg { width: 24px; height: 24px; }

.details { width: 276px; padding: 8px 24px; border-left: 1px solid #f2f2f2; }
.details h2 { color: #1e395b; font-size: 14px; line-height: 20px; }
.details svg { width: 88px; height: 72px; margin: 43px 0 0 7px; }

/* Status bar */
.status {
  display: flex;
  align-items: center;
  justify-content: space-between;
  height: 24px;
  padding: 0 8px 0 14px;
  color: #1e395b;
}
.status span { padding-right: 8px; border-right: 1px solid #f0f0f0; }
.views { display: flex; gap: 7px; }
```
